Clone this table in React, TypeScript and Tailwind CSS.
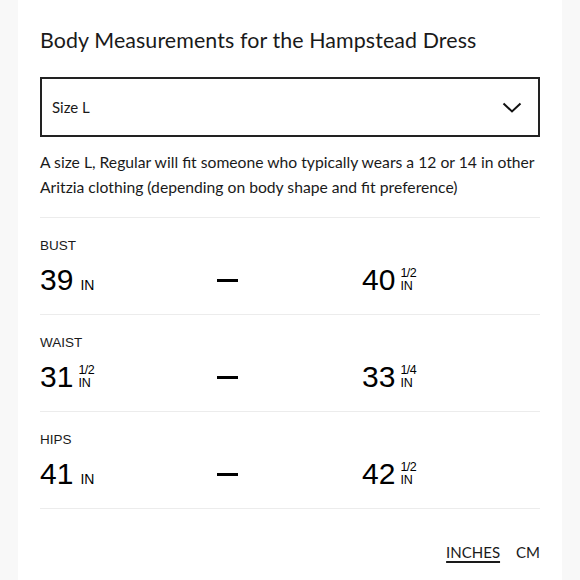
import React from 'react';

type Value = { whole: string; frac?: string };

const rows: { label: string; from: Value; to: Value }[] = [
  { label: 'BUST', from: { whole: '39' }, to: { whole: '40', frac: '1/2' } },
  { label: 'WAIST', from: { whole: '31', frac: '1/2' }, to: { whole: '33', frac: '1/4' } },
  { label: 'HIPS', from: { whole: '41' }, to: { whole: '42', frac: '1/2' } },
];

const geo = "font-['Lato','Noto_Sans',sans-serif]";
const arial = "font-['Liberation_Sans',Arial,sans-serif]";

function Measure({ value }: { value: Value }) {
  if (value.frac) {
    return (
      <div className={`flex items-end ${arial} text-black`}>
        <span className="text-[30px] leading-[30px]">{value.whole}</span>
        <span className="mb-[3px] ml-[5px] flex flex-col text-[12.5px] leading-[12.5px]">
          <span className="tracking-[-0.5px]">{value.frac}</span>
          <span>IN</span>
        </span>
      </div>
    );
  }
  return (
    <div className={`flex items-baseline ${arial} text-black`}>
      <span className="text-[30px] leading-[30px]">{value.whole}</span>
      <span className="ml-[7px] text-[14px]">IN</span>
    </div>
  );
}

export default function App() {
  return (
    <div className="min-h-screen bg-[#f8f8f8]">
      <div className="mx-[18px] min-h-[580px] bg-white px-[22px] pt-[26px] text-[#1a1a1a]">
        <h1 className={`${geo} text-[21.4px] leading-[28px] tracking-[0.1px]`}>
          Body Measurements for the Hampstead Dress
        </h1>

        {/* size select */}
        <div className="mt-[23px] flex h-[60px] items-center justify-between border-2 border-[#222] pl-[10px] pr-[16px]">
          <span className={`${geo} text-[15px]`}>Size L</span>
          <svg width="20" height="11" viewBox="0 0 20 11" fill="none">
            <polyline points="1.5,1.5 10,9.5 18.5,1.5" stroke="#111" strokeWidth="2" />
          </svg>
        </div>

        <p className={`${geo} mt-[13px] text-[15.7px] leading-[25px]`}>
          A size L, Regular will fit someone who typically wears a 12 or 14 in other Aritzia clothing
          (depending on body shape and fit preference)
        </p>

        <div className="mt-[17px] border-t border-[#ececec]">
          {rows.map((r) => (
            <div key={r.label} className="border-b border-[#ececec] pt-[20px] pb-[17px]">
              <div className={`${arial} text-[13.5px] leading-[16px]`}>{r.label}</div>
              <div className="mt-[9px] grid h-[34px] grid-cols-[177px_145px_1fr] items-center">
                <Measure value={r.from} />
                <div className="flex">
                  <span className="block h-[3px] w-[21px] bg-black" />
                </div>
                <Measure value={r.to} />
              </div>
            </div>
          ))}
        </div>

        <div className={`${geo} mt-[32px] flex justify-end gap-[16px] text-[15px]`}>
          <span className="underline decoration-[1.5px] underline-offset-[3px]">INCHES</span>
          <span>CM</span>
        </div>
      </div>
    </div>
  );
}
